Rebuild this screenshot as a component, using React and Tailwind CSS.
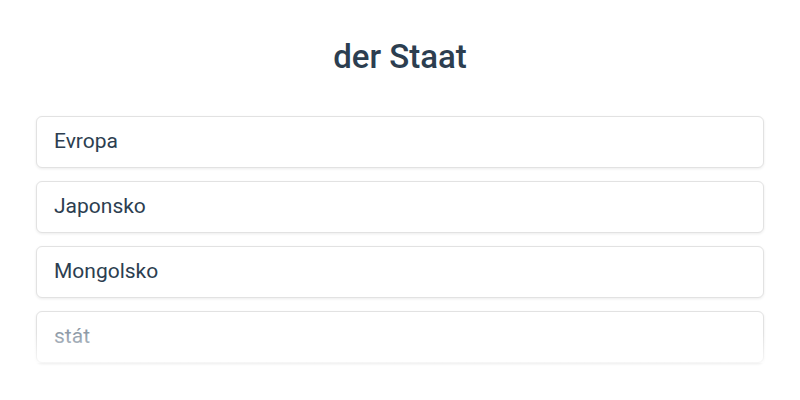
const options = ['Evropa', 'Japonsko', 'Mongolsko'];

export default function App() {
  return (
    <div className="w-[800px] h-[400px] bg-white overflow-hidden" style={{ fontFamily: 'Roboto, "Liberation Sans", sans-serif' }}>
      <h1 className="pt-[37px] text-center text-[33px] leading-[40px] font-medium text-[#2c3e50]">der Staat</h1>
      <div className="relative mt-[39px] px-[36px] flex flex-col gap-[13px]">
        {options.map((o) => (
          <div
            key={o}
            className="h-[52px] flex items-center px-[17px] rounded-[6px] border border-[#e2e2e2] bg-white shadow-[0_1px_3px_rgba(0,0,0,0.08)] text-[21px] text-[#2c3e50]"
          >
            {o}
          </div>
        ))}
        <div className="h-[52px] flex items-center px-[17px] rounded-[6px] border border-[#e2e2e2] bg-white shadow-[0_1px_3px_rgba(0,0,0,0.08)] text-[21px] text-[#8e9aa7]">
          stát
        </div>
        <div className="absolute left-0 right-0 bottom-0 h-[30px] bg-gradient-to-b from-white/0 to-white/70 pointer-events-none" />
      </div>
    </div>
  );
}
